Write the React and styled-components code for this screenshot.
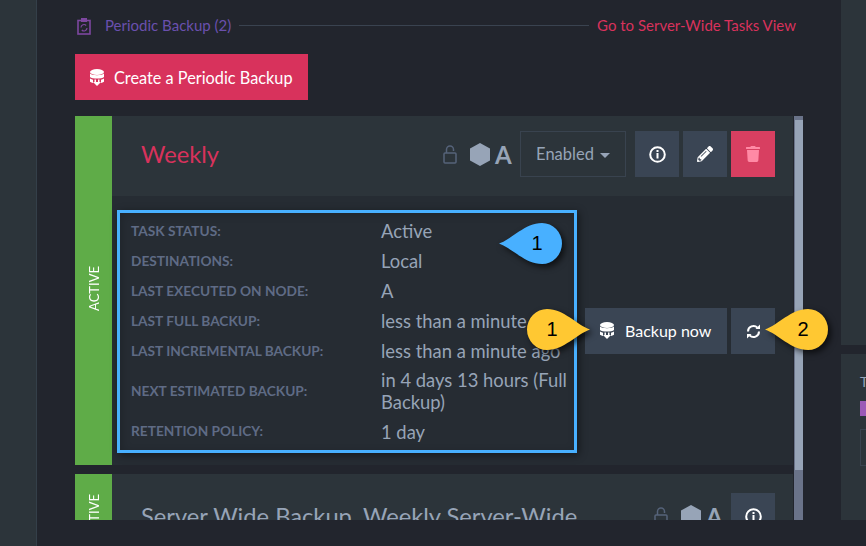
import React from 'react';
import styled, { createGlobalStyle } from 'styled-components';
import { FaPencilAlt, FaTrash } from 'react-icons/fa';

const GlobalStyle = createGlobalStyle`
  html, body {
    margin: 0;
    padding: 0;
    background: #22252d;
  }
  * {
    box-sizing: border-box;
  }
`;

const Page = styled.div`
  position: relative;
  width: 866px;
  height: 546px;
  display: flex;
  overflow: hidden;
  background: #22252d;
  font-family: Lato, "Open Sans", sans-serif;
`;

const Sidebar = styled.div`
  width: 37px;
  flex-shrink: 0;
  background: #2c343a;
  border-right: 1px solid #343f49;
`;

const Main = styled.main`
  width: 804px;
  flex-shrink: 0;
  padding: 16px 38px 26px 38px;
  display: flex;
  flex-direction: column;
`;

const RightColumn = styled.aside`
  flex: 1;
  display: flex;
  flex-direction: column;
  gap: 9px;
`;

const SidePanel = styled.div`
  height: ${props => props.height}px;
  flex-shrink: 0;
  background: #2c343a;
  padding: 19px 0 0 19px;
  overflow: hidden;
`;

const SideLabel = styled.div`
  font-size: 14px;
  line-height: 17px;
  color: #97a4b7;
`;

const SideSwatch = styled.div`
  height: 15px;
  margin-top: 11px;
  background: #9b59b6;
`;

const SideBox = styled.div`
  height: 37px;
  margin-top: 13px;
  border: 1px solid #39434f;
`;

const TitleRow = styled.div`
  height: 20px;
  display: flex;
  align-items: center;
  padding: 0 7px 2px 2px;
  margin-bottom: 18px;
  font-size: 15px;
`;

const TitleIcon = styled.svg`
  width: 14px;
  height: 17px;
  margin: 2px 14px 0 0;
`;

const TitleText = styled.span`
  color: #6a50ad;
`;

const TitleLine = styled.div`
  flex: 1;
  height: 1px;
  margin: 0 8px;
  background: #3a4350;
`;

const TitleLink = styled.a`
  color: #d8325c;
`;

const CreateButton = styled.button`
  width: 233px;
  height: 46px;
  flex-shrink: 0;
  margin-bottom: 16px;
  padding: 1px 0 0 15px;
  display: flex;
  align-items: center;
  gap: 10px;
  border: 0;
  background: #d8325c;
  color: #ffffff;
  font-family: inherit;
  font-size: 16.3px;
`;

const Scroller = styled.div`
  flex: 1;
  min-height: 0;
  display: flex;
  justify-content: space-between;
`;

const CardList = styled.div`
  width: 718px;
  overflow: hidden;
  display: flex;
  flex-direction: column;
  gap: 9px;
`;

const ScrollTrack = styled.div`
  width: 9px;
  background: #6a7389;
  padding-top: 4px;
`;

const ScrollThumb = styled.div`
  height: 350px;
  background: #97a4b7;
  margin-left: 1px;
`;

const Card = styled.section`
  flex-shrink: 0;
  display: flex;
  background: #262c33;
`;

const StatusStripe = styled.div`
  width: 37px;
  flex-shrink: 0;
  padding-bottom: ${props => props.bottomGap}px;
  display: flex;
  align-items: center;
  justify-content: center;
  background: #5fac48;
`;

const StatusText = styled.span`
  writing-mode: vertical-rl;
  transform: rotate(180deg);
  color: #ffffff;
  font-size: 13px;
  line-height: 14px;
`;

const CardContent = styled.div`
  flex: 1;
  min-width: 0;
`;

const CardHeader = styled.header`
  height: ${props => props.height}px;
  display: flex;
  align-items: center;
  padding: 0 18px ${props => props.bottomGap}px 29px;
  background: #2c343a;
`;

const CardTitle = styled.h3`
  flex: 1;
  margin: 0;
  font-size: 23.7px;
  font-weight: 400;
  white-space: nowrap;
  color: ${props => props.color};
`;

const LockIcon = styled.svg`
  width: 14px;
  height: 19px;
  margin-right: 13px;
  color: #56637a;
`;

const NodeIcon = styled.svg`
  width: 20px;
  height: 23px;
  margin-right: 5px;
`;

const NodeLetter = styled.span`
  width: 16px;
  margin-right: 9px;
  font-size: 24px;
  font-weight: 700;
  color: #97a4b7;
`;

const StateSelect = styled.div`
  width: 106px;
  height: 46px;
  margin-right: 9px;
  display: flex;
  align-items: center;
  justify-content: center;
  gap: 6px;
  border: 1px solid #39434f;
  color: #97a4b7;
  font-size: 16.5px;
`;

const Caret = styled.span`
  width: 0;
  height: 0;
  margin-top: 2px;
  border-left: 5px solid transparent;
  border-right: 5px solid transparent;
  border-top: 5px solid #97a4b7;
`;

const ButtonGroup = styled.div`
  display: flex;
  gap: 4px;
`;

const IconButton = styled.button`
  width: 44px;
  height: 46px;
  padding: 0;
  display: flex;
  align-items: center;
  justify-content: center;
  border: 0;
  background: ${props => (props.danger ? '#d83f61' : '#3a4554')};
  color: ${props => (props.danger ? '#ff8aa5' : '#ffffff')};
  font-size: 16px;
`;

const CardBody = styled.div`
  display: flex;
  align-items: center;
  padding: 14px 0 12px 5px;
`;

const DetailsBox = styled.div`
  width: 460px;
  flex-shrink: 0;
  padding: 3px 0 3px 11px;
  border: 3px solid #48b0ff;
  box-shadow: 2px 2px 8px rgba(0, 0, 0, 0.45), inset 2px 2px 8px rgba(0, 0, 0, 0.18);
`;

const DetailRow = styled.div`
  min-height: 30px;
  padding: 3px 0;
  display: grid;
  grid-template-columns: 250px 1fr;
  align-items: center;

  &:last-child {
    min-height: 31px;
  }
`;

const DetailLabel = styled.div`
  padding-bottom: 2px;
  font-size: 13.7px;
  font-weight: 700;
  text-transform: uppercase;
  color: #5f6b85;
`;

const DetailValue = styled.div`
  padding-right: 3px;
  font-size: 18.4px;
  line-height: 22px;
  color: #97a4b7;
`;

const BodyActions = styled.div`
  margin: -1px 0 0 8px;
  display: flex;
  gap: 4px;
`;

const BackupButton = styled.button`
  width: 142px;
  height: 46px;
  padding: 0 0 1px 15px;
  display: flex;
  align-items: center;
  gap: 11px;
  border: 0;
  background: #3a4554;
  color: #ffffff;
  font-family: inherit;
  font-size: 16px;
`;

const Callout = styled.div`
  position: absolute;
  left: ${props => props.x}px;
  top: ${props => props.y}px;
  width: 63px;
  height: 41px;
`;

const CalloutShape = styled.svg`
  display: block;
  width: 63px;
  height: 41px;
  overflow: visible;
  fill: ${props => props.fill};
  transform: ${props => (props.flip ? 'scaleX(-1)' : 'none')};
  filter: drop-shadow(${props => (props.flip ? '-3px' : '3px')} 3px 3px rgba(0, 0, 0, 0.65));
`;

const CalloutNumber = styled.span`
  position: absolute;
  top: 0;
  left: ${props => props.offset}px;
  width: 24px;
  text-align: center;
  font-family: "Liberation Sans", Arial, sans-serif;
  font-size: 20px;
  line-height: 41px;
  color: #000000;
`;

function DatabaseIcon({ color = '#ffffff' }) {
  return (
    <svg width="14" height="17" viewBox="0 0 14 17" fill={color}>
      <ellipse cx="7" cy="3" rx="7" ry="3" />
      <path d="M0 4.500c2 2.300 12 2.300 14 0v3.500c-2 2-12 2-14 0z" />
      <path d="M0 9.500c1 .8 2 1.100 3 1.300V14c-1-.2-2-.6-3-1.300zM14 9.500c-1 .8-2 1.100-3 1.300V14c1-.2 2-.6 3-1.300z" />
      <path d="M4.500 10.500h1.500v2.500h2V10.500h1.500V13H11l-4 4-4-4h1.500z" />
    </svg>
  );
}

function InfoIcon() {
  return (
    <svg width="17" height="17" viewBox="0 0 17 17" fill="none">
      <circle cx="8.500" cy="8.500" r="7.300" stroke="#ffffff" strokeWidth="2" />
      <rect x="7.500" y="7" width="2" height="5.500" fill="#ffffff" />
      <rect x="7.500" y="4" width="2" height="2" fill="#ffffff" />
    </svg>
  );
}

function RefreshIcon() {
  return (
    <svg width="15" height="17" viewBox="0 0 15 17" fill="none">
      <path d="M2 8.500A5.500 5.500 0 0 1 11.400 4.600" stroke="#ffffff" strokeWidth="2" />
      <path d="M13 8.500A5.500 5.500 0 0 1 3.600 12.400" stroke="#ffffff" strokeWidth="2" />
      <polygon points="9.500,6 14,6 14,1.500" fill="#ffffff" />
      <polygon points="5.500,11 1,11 1,15.500" fill="#ffffff" />
    </svg>
  );
}

function NodeBadge() {
  return (
    <>
      <LockIcon viewBox="0 0 14 19" fill="none" stroke="currentColor" strokeWidth="1.500">
        <rect x="1" y="8" width="12" height="10" rx="1" />
        <path d="M3.500 8V4.500a3.500 3.500 0 0 1 7 0V6" />
      </LockIcon>
      <NodeIcon viewBox="0 0 20 23">
        <polygon points="10,0 20,5.500 20,17.500 10,23 0,17.500 0,5.500" fill="#97a4b7" />
      </NodeIcon>
      <NodeLetter>A</NodeLetter>
    </>
  );
}

const details = [
  ['Task status:', 'Active'],
  ['Destinations:', 'Local'],
  ['Last executed on node:', 'A'],
  ['Last full backup:', 'less than a minute ago'],
  ['Last incremental backup:', 'less than a minute ago'],
  ['Next estimated backup:', 'in 4 days 13 hours (Full Backup)'],
  ['Retention policy:', '1 day'],
];

const callouts = [
  { key: 'details', x: 499, y: 223, fill: '#48b0ff', flip: false, offset: 26, label: '1' },
  { key: 'backup', x: 527, y: 309, fill: '#ffc832', flip: true, offset: 13, label: '1' },
  { key: 'refresh', x: 765, y: 309, fill: '#ffc832', flip: false, offset: 26, label: '2' },
];

function App() {
  return (
    <Page>
      <GlobalStyle />
      <Sidebar />
      <Main>
        <TitleRow>
          <TitleIcon viewBox="0 0 14 17" fill="none" stroke="#7d479f">
            <rect x="1" y="2.500" width="12" height="13.500" strokeWidth="1.600" />
            <rect x="4.500" y="0.500" width="5" height="3" fill="#7d479f" strokeWidth="1" />
            <path d="M4 9.500a3 3 0 0 1 5.200-2M10 10a3 3 0 0 1-5.200 2" strokeWidth="1.200" />
          </TitleIcon>
          <TitleText>Periodic Backup (2)</TitleText>
          <TitleLine />
          <TitleLink>Go to Server-Wide Tasks View</TitleLink>
        </TitleRow>
        <CreateButton>
          <DatabaseIcon />
          Create a Periodic Backup
        </CreateButton>
        <Scroller>
          <CardList>
            <Card>
              <StatusStripe bottomGap={4}>
                <StatusText>ACTIVE</StatusText>
              </StatusStripe>
              <CardContent>
                <CardHeader height={80} bottomGap={4}>
                  <CardTitle color="#d8325c">Weekly</CardTitle>
                  <NodeBadge />
                  <StateSelect>
                    Enabled
                    <Caret />
                  </StateSelect>
                  <ButtonGroup>
                    <IconButton><InfoIcon /></IconButton>
                    <IconButton><FaPencilAlt /></IconButton>
                    <IconButton danger><FaTrash /></IconButton>
                  </ButtonGroup>
                </CardHeader>
                <CardBody>
                  <DetailsBox>
                    {details.map(([label, value]) => (
                      <DetailRow key={label}>
                        <DetailLabel>{label}</DetailLabel>
                        <DetailValue>{value}</DetailValue>
                      </DetailRow>
                    ))}
                  </DetailsBox>
                  <BodyActions>
                    <BackupButton>
                      <DatabaseIcon />
                      Backup now
                    </BackupButton>
                    <IconButton><RefreshIcon /></IconButton>
                  </BodyActions>
                </CardBody>
              </CardContent>
            </Card>
            <Card>
              <StatusStripe bottomGap={0}>
                <StatusText>ACTIVE</StatusText>
              </StatusStripe>
              <CardContent>
                <CardHeader height={84} bottomGap={0}>
                  <CardTitle color="#97a4b7">Server Wide Backup, Weekly Server-Wide</CardTitle>
                  <NodeBadge />
                  <IconButton><InfoIcon /></IconButton>
                </CardHeader>
              </CardContent>
            </Card>
          </CardList>
          <ScrollTrack>
            <ScrollThumb />
          </ScrollTrack>
        </Scroller>
      </Main>
      <RightColumn>
        <SidePanel height={345} />
        <SidePanel height={166}>
          <SideLabel>T</SideLabel>
          <SideSwatch />
          <SideBox />
        </SidePanel>
      </RightColumn>
      {callouts.map(callout => (
        <Callout key={callout.key} x={callout.x} y={callout.y}>
          <CalloutShape viewBox="0 0 63 41" fill={callout.fill} flip={callout.flip}>
            <path d="M0 20.500C13 16 26 0 43 0a20 20.500 0 0 1 0 41C26 41 13 25 0 20.500z" />
          </CalloutShape>
          <CalloutNumber offset={callout.offset}>{callout.label}</CalloutNumber>
        </Callout>
      ))}
    </Page>
  );
}

export default App;
